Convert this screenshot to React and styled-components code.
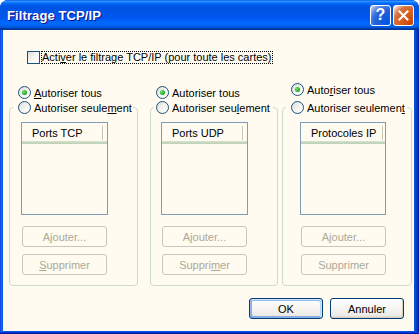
import React from 'react';
import styled, { createGlobalStyle, css } from 'styled-components';

const Global = createGlobalStyle`
  html, body { margin: 0; padding: 0; background: #ffffff; }
  body { font-family: "Liberation Sans", Arial, sans-serif; font-size: 11px; color: #000; }
  * { box-sizing: border-box; }
`;

const Window = styled.div`
  width: 419px;
  height: 334px;
  display: flex;
  flex-direction: column;
  border-radius: 8px 8px 0 0;
  overflow: hidden;
  background: #0055ea;
`;

const TitleBar = styled.div`
  height: 30px;
  flex: none;
  display: flex;
  align-items: center;
  padding: 1px 5px 0 7px;
  background: linear-gradient(to bottom, #0058ee 0%, #3593ff 4%, #288eff 6%, #127dff 8%, #036ffc 10%, #0262ee 14%, #0057e5 20%, #0054e3 24%, #0055eb 56%, #005bf5 66%, #026afe 76%, #0062ef 86%, #0052d6 92%, #0040ab 94%, #003092 100%);
`;

const Title = styled.div`
  color: #fff;
  font-family: "Liberation Sans", Arial, sans-serif;
  font-weight: bold;
  font-size: 13px;
  letter-spacing: 0.1px;
  text-shadow: 1px 1px #0f1089;
`;

const TitleButtons = styled.div`
  margin-left: auto;
  display: flex;
  gap: 2px;
  margin-top: -1px;
`;

const CaptionButton = styled.div`
  width: 21px;
  height: 21px;
  border: 1px solid #fff;
  border-radius: 3px;
  display: flex;
  align-items: center;
  justify-content: center;
  color: #fff;
  font-family: "Liberation Sans", Arial, sans-serif;
  font-weight: bold;
  font-size: 16px;
  ${p => p.$kind === 'close'
    ? css`background: radial-gradient(circle at 90% 90%, #cc4600 0%, #dc6527 55%, #cd7546 70%, #ffccb2 90%, #ffffff 100%);`
    : css`background: radial-gradient(circle at 90% 90%, #0054e9 0%, #2263d5 55%, #4479e4 70%, #a3bbec 90%, #ffffff 100%);`}
`;

const Frame = styled.div`
  flex: 1;
  display: flex;
  padding: 0 5px 3px 3px;
  background: linear-gradient(to right, #0831d9 0, #166aee 1px, #0855dd 3px, #0855dd calc(100% - 5px), #0b44c8 calc(100% - 3px), #001ea0 100%);
  box-shadow: inset 0 -1px #001ea0, inset 0 -2px #0831d9;
`;

const Client = styled.div`
  flex: 1;
  background: #fffbf0;
  display: flex;
  flex-direction: column;
`;

const CheckRow = styled.label`
  display: flex;
  align-items: center;
  gap: 1px;
  height: 13px;
  margin: 21px 0 0 24px;
`;

const CheckBox = styled.span`
  width: 13px;
  height: 13px;
  flex: none;
  border: 1px solid #1c5180;
  background: linear-gradient(135deg, #dcdcd7 0%, #f5f5f1 45%, #ffffff 100%);
`;

const FocusLabel = styled.span`
  border: 1px dotted #000;
  height: 13px;
  line-height: 11px;
  padding: 0 1px 0 0;
  white-space: nowrap;
`;

const Columns = styled.div`
  display: flex;
  margin-top: 21px;
`;

const Column = styled.div`
  flex: none;
  width: ${p => p.$w}px;
  margin-left: ${p => p.$ml}px;
  display: flex;
  flex-direction: column;
`;

const RadioRow = styled.label`
  display: flex;
  align-items: center;
  height: 15px;
  gap: 3px;
  padding-left: ${p => p.$inset}px;
  white-space: nowrap;
  ${p => p.$lift && css`margin: -${p.$lift}px 0 ${p.$lift}px 0;`}
`;

const RadioCircle = styled.span`
  width: 13px;
  height: 13px;
  flex: none;
  border-radius: 50%;
  border: 1px solid #1c5180;
  background: linear-gradient(135deg, #dcdcd7 0%, #f3f3ef 50%, #ffffff 100%);
  display: flex;
  align-items: center;
  justify-content: center;
  ${p => p.$checked && css`
    &::after {
      content: '';
      width: 5px;
      height: 5px;
      border-radius: 50%;
      background: radial-gradient(circle at 35% 35%, #7be27a 0%, #2db52d 50%, #0f8a0f 100%);
    }
  `}
`;

const Group = styled.fieldset`
  margin: 0;
  min-inline-size: 0;
  border: 1px solid #cbdcc2;
  border-radius: 4px;
  padding: 7px 0 10px 0;
`;

const Legend = styled.legend`
  margin-left: 3px;
  padding: 0;
  width: ${p => p.$w}px;
  height: 15px;
`;

const GroupBody = styled.div`
  display: flex;
  flex-direction: column;
  align-items: flex-start;
  padding-left: ${p => p.$pad}px;
`;

const ListBox = styled.div`
  width: ${p => p.$w}px;
  height: 93px;
  border: 1px solid #7f9db9;
  background: #fffbf0;
`;

const ListHeader = styled.div`
  display: flex;
  height: 21px;
  box-shadow: inset 0 -1px #c0d3b8, inset 0 -2px #c7d8c0, inset 0 -3px #d2e0cb;
`;

const HeaderCell = styled.div`
  width: ${p => p.$w}px;
  height: 18px;
  padding: 3px 0 0 10px;
  line-height: 14px;
  position: relative;
  white-space: nowrap;
  &::after {
    content: '';
    position: absolute;
    right: 0;
    top: 3px;
    bottom: 1px;
    width: 1px;
    background: #c7c5b2;
    box-shadow: 1px 0 #ffffff;
  }
`;

const DisabledButton = styled.button`
  width: 85px;
  height: 21px;
  margin: ${p => p.$mt}px 0 0 1px;
  padding: 0;
  border: 1px solid #c9c7ba;
  border-radius: 3px;
  background: transparent;
  color: #aca899;
  font: inherit;
  text-align: center;
`;

const Footer = styled.div`
  display: flex;
  justify-content: flex-end;
  gap: 7px;
  padding: 12px 10px 0 0;
`;

const PushButton = styled.button`
  width: 74px;
  height: 21px;
  padding: 0;
  border: 1px solid #003c74;
  border-radius: 3px;
  font: inherit;
  color: #000;
  background: linear-gradient(to bottom, #ffffff 0%, #f5f4f0 50%, #ecebe6 86%, #d6d0c5 100%);
  ${p => p.$default
    ? css`box-shadow: inset -1px 1px #cee7ff, inset 1px 2px #98b8ea, inset -2px 2px #bcd4f6, inset 1px -1px #89ade4, inset 2px -2px #89ade4;`
    : css`box-shadow: inset -1px -1px #d6d0c5, inset 0 -2px #e3e0d5;`}
`;

const columns = [
  { w: 129, ml: 6, inset: 9, pad: 11, list: 87, head: 81, header: 'Ports TCP',
    all: <><u>A</u>utoriser tous</>, only: <>Autoriser seule<u>m</u>ent</>,
    add: <>Ajouter...</>, del: <><u>S</u>upprimer</> },
  { w: 128, ml: 12, inset: 6, pad: 10, list: 87, head: 81, header: 'Ports UDP',
    all: <>Autoriser tous</>, only: <>Autoriser seu<u>l</u>ement</>,
    add: <>Ajouter...</>, del: <>Suppri<u>m</u>er</> },
  { w: 130, ml: 4, inset: 9, pad: 17, list: 86, head: 82, header: 'Protocoles IP', lift: 3,
    all: <>Auto<u>r</u>iser tous</>, only: <>Autoriser seulemen<u>t</u></>,
    add: <>Ajouter...</>, del: <>Supprimer</> },
];

function Radio({ checked, children, inset, lift }) {
  return (
    <RadioRow $inset={inset} $lift={lift}>
      <RadioCircle $checked={checked} />
      <span>{children}</span>
    </RadioRow>
  );
}

export default function App() {
  return (
    <>
      <Global />
      <Window>
        <TitleBar>
          <Title>Filtrage TCP/IP</Title>
          <TitleButtons>
            <CaptionButton $kind="help">?</CaptionButton>
            <CaptionButton $kind="close">
              <svg width="11" height="11" viewBox="0 0 11 11">
                <path d="M1.5 1.5 L9.5 9.5 M9.5 1.5 L1.5 9.5" stroke="#fff" strokeWidth="2" strokeLinecap="square" />
              </svg>
            </CaptionButton>
          </TitleButtons>
        </TitleBar>
        <Frame>
          <Client>
            <CheckRow>
              <CheckBox />
              <FocusLabel>Acti<u>v</u>er le filtrage TCP/IP (pour toute les cartes)</FocusLabel>
            </CheckRow>
            <Columns>
              {columns.map((c, i) => (
                <Column key={i} $w={c.w} $ml={c.ml}>
                  <Radio checked inset={c.inset} lift={c.lift}>{c.all}</Radio>
                  <Group>
                    <Legend $w={c.w - 9}>
                      <Radio inset={c.inset - 4}>{c.only}</Radio>
                    </Legend>
                    <GroupBody $pad={c.pad}>
                      <ListBox $w={c.list}>
                        <ListHeader>
                          <HeaderCell $w={c.head}>{c.header}</HeaderCell>
                        </ListHeader>
                      </ListBox>
                      <DisabledButton disabled $mt={11}>{c.add}</DisabledButton>
                      <DisabledButton disabled $mt={7}>{c.del}</DisabledButton>
                    </GroupBody>
                  </Group>
                </Column>
              ))}
            </Columns>
            <Footer>
              <PushButton $default>OK</PushButton>
              <PushButton>Annuler</PushButton>
            </Footer>
          </Client>
        </Frame>
      </Window>
    </>
  );
}
